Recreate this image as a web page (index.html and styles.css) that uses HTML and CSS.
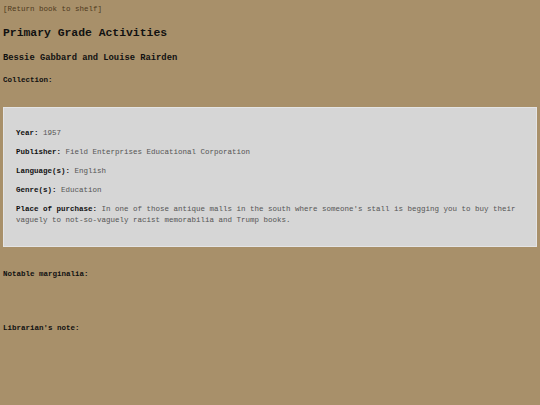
FILE: index.html
```html
<!DOCTYPE html>
<html>
<head>
<meta charset="utf-8">
<link rel="stylesheet" href="styles.css">
</head>
<body>
<a class="back" href="#">[Return book to shelf]</a>
<h1 class="title">Primary Grade Activities</h1>
<h2 class="authors">Bessie Gabbard and Louise Rairden</h2>
<p class="label collection">Collection:</p>
<div class="card">
  <p class="row"><b>Year:</b> <span class="val">1957</span></p>
  <p class="row"><b>Publisher:</b> <span class="val">Field Enterprises Educational Corporation</span></p>
  <p class="row"><b>Language(s):</b> <span class="val">English</span></p>
  <p class="row"><b>Genre(s):</b> <span class="val">Education</span></p>
  <p class="row"><b>Place of purchase:</b> <span class="val">In one of those antique malls in the south where someone's stall is begging you to buy their vaguely to not-so-vaguely racist memorabilia and Trump books.</span></p>
</div>
<p class="label marginalia">Notable marginalia:</p>
<p class="label note">Librarian's note:</p>
</body>
</html>
```
FILE: styles.css
```css
html { background: #a8906a; }
body {
  margin: 4px 3px 3px;
  font-family: "Liberation Mono", "Courier New", monospace;
  font-size: 7.5px;
  line-height: 11px;
  color: #111;
}
.back {
  display: block;
  color: #4f3a20;
  text-decoration: none;
  line-height: 11px;
}
.title {
  margin: 11px 0 0;
  font-size: 11.4px;
  line-height: 14px;
  font-weight: bold;
}
.authors {
  margin: 12px 0 0;
  font-size: 8.8px;
  line-height: 12px;
  font-weight: bold;
}
.label {
  margin: 0;
  font-weight: bold;
}
.collection { margin-top: 10.5px; }
.card {
  margin-top: 21.5px;
  background: #d6d6d6;
  border: 1px solid #e4e4e4;
  padding: 19.5px 12px 20.5px;
}
.row { margin: 0 0 8px; }
.row:last-child { margin-bottom: 0; }
.row b { color: #111; }
.val { color: #555; }
.marginalia { margin-top: 21.5px; }
.note { margin-top: 43px; }
```
